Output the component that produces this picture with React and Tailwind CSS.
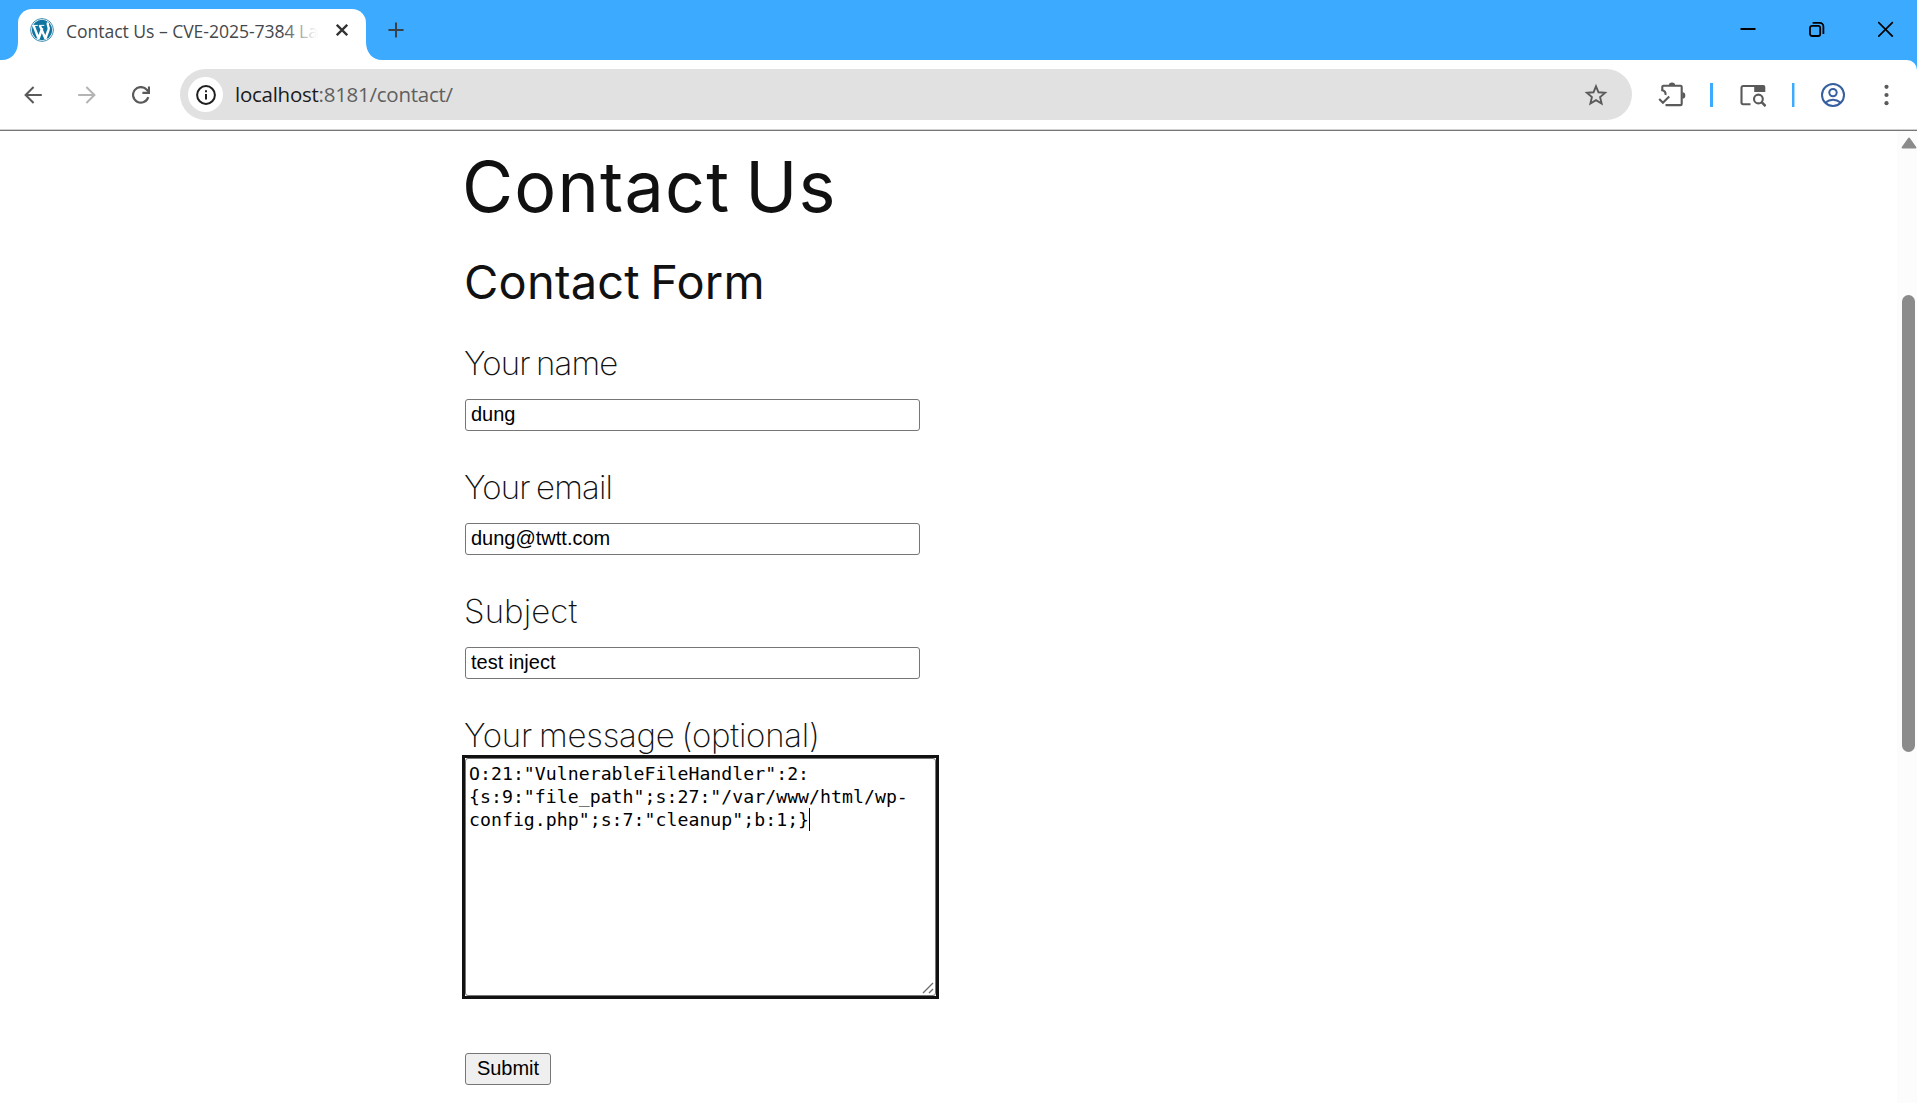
const fields = [
  { id: "your-name", label: "Your name", value: "dung", tracking: "tracking-[-0.85px]" },
  { id: "your-email", label: "Your email", value: "dung@twtt.com", tracking: "tracking-[-0.85px]" },
  { id: "your-subject", label: "Subject", value: "test inject", tracking: "tracking-[0.1px]" },
];

const messageLines = [
  'O:21:"VulnerableFileHandler":2:',
  '{s:9:"file_path";s:27:"/var/www/html/wp-',
  'config.php";s:7:"cleanup";b:1;}',
];

const WordPressIcon = () => (
  <svg className="h-6 w-6 shrink-0" viewBox="0 0 24 24" aria-hidden>
    <circle cx="12" cy="12" r="11.4" fill="#fff" stroke="#3f8fb3" strokeWidth="1" />
    <circle cx="12" cy="12" r="10.2" fill="#0f749f" />
    <path
      fill="none"
      stroke="#fff"
      strokeWidth="2.4"
      strokeLinejoin="bevel"
      d="M3.6 7.6 8.6 20.5 12.3 10 M9.9 7.6 15.4 20.5 18.6 11.5 C19.6 8.6 16.6 7.6 18 4.6"
    />
    <path stroke="#fff" strokeWidth="1" d="M2.6 7.4h5.2M8.9 7.4h5.4" />
  </svg>
);

function TabStrip() {
  return (
    <div className="flex h-[60px] items-end bg-[#3cabff]">
      <svg className="h-[18px] w-[18px] shrink-0" viewBox="0 0 18 18" aria-hidden>
        <path fill="#fff" d="M18 0v18H2C11 18 18 11 18 0z" />
      </svg>
      <div className="flex h-[51px] w-[348px] items-center rounded-t-[14px] bg-white pb-[9px] pl-3">
        <WordPressIcon />
        <div className="relative ml-3 w-[251px] pt-0.5 text-[17.6px] tracking-[-0.06px] whitespace-nowrap text-[#45484b]">
          Contact Us – CVE-2025-7384 La
          <span className="absolute inset-y-0 right-0 w-[34px] bg-linear-to-r from-transparent to-white" />
        </div>
        <svg className="ml-[19px] h-3 w-3 shrink-0" viewBox="0 0 12 12" stroke="#333" strokeWidth="2.3" aria-hidden>
          <path d="M.8.8l10.4 10.4M11.2.8.8 11.2" />
        </svg>
      </div>
      <svg className="h-[18px] w-[18px] shrink-0" viewBox="0 0 18 18" aria-hidden>
        <path fill="#fff" d="M0 0v18h16C7 18 0 11 0 0z" />
      </svg>
      <svg className="mb-[22px] ml-1 h-4 w-4" viewBox="0 0 16 16" stroke="#3a4148" strokeWidth="2" aria-hidden>
        <path d="M8 .4v15.2M.4 8h15.2" />
      </svg>

      <div className="ml-auto flex h-full items-center pb-[2px]">
        <button type="button" aria-label="Minimize" className="flex w-[62px] justify-center">
          <svg className="h-4 w-4" viewBox="0 0 16 16" stroke="#000" strokeWidth="2">
            <path d="M.5 8h15" />
          </svg>
        </button>
        <button type="button" aria-label="Restore" className="flex w-[76px] justify-center">
          <svg className="h-4 w-4" viewBox="0 0 16 16" fill="none" stroke="#000" strokeWidth="1.8">
            <rect x="1" y="4.8" width="10.2" height="10.2" rx="2" />
            <path d="M3.6 1.9h7.2a3.6 3.6 0 0 1 3.6 3.6v7.4" />
          </svg>
        </button>
        <button type="button" aria-label="Close" className="flex w-[62px] justify-center">
          <svg className="h-4 w-4" viewBox="0 0 16 16" stroke="#000" strokeWidth="1.7">
            <path d="M.2 1.1l14.6 14.6M14.8 1.1.2 15.7" />
          </svg>
        </button>
      </div>
    </div>
  );
}

function Toolbar() {
  return (
    <div className="bg-[#3cabff]">
      <div className="flex h-[69px] items-center rounded-tr-[10px] bg-white pl-1.5">
        <button type="button" aria-label="Back" className="flex w-[54px] justify-center">
          <svg className="h-[18px] w-[18px]" viewBox="0 0 18 18" fill="none" stroke="#5a5a5a" strokeWidth="2">
            <path d="M17.8 9H1.8M9.6 1 1.6 9l8 8" />
          </svg>
        </button>
        <button type="button" aria-label="Forward" className="flex w-[54px] justify-center">
          <svg className="h-[18px] w-[18px]" viewBox="0 0 18 18" fill="none" stroke="#b4b4b4" strokeWidth="2">
            <path d="M.2 9h16M8.4 1l8 8-8 8" />
          </svg>
        </button>
        <button type="button" aria-label="Reload" className="flex w-[54px] justify-center">
          <svg className="h-[18px] w-[18px]" viewBox="0 0 18 18" fill="none" stroke="#5a5a5a" strokeWidth="2.2">
            <path d="M16.3 11.2A7.8 7.8 0 1 1 14.9 3.9L17 6" />
            <path d="M17 .4v6.5h-6.6" />
          </svg>
        </button>

        <div className="ml-3 flex h-[51px] w-[1452px] items-center rounded-full bg-[#e1e1e1] pl-2">
          <div className="flex h-[35px] w-[35px] items-center justify-center rounded-full bg-white">
            <svg className="h-5 w-5" viewBox="0 0 20 20" fill="none" stroke="#1f1f1f" strokeWidth="2" aria-hidden>
              <circle cx="10" cy="10" r="8.9" />
              <path d="M10 9v5.5M10 5.3v2" />
            </svg>
          </div>
          <div className="ml-3 text-[20.5px] tracking-[-0.26px] text-[#5f5f5f]">
            <span className="text-[#1b1b1b]">localhost</span>:8181/contact/
          </div>
          <svg className="mr-[24px] ml-auto h-[24px] w-[24px]" viewBox="0 0 24 24" fill="none" stroke="#5a5a5a" strokeWidth="1.9" aria-hidden>
            <path d="M12 3.3l2.5 6 6.6.55-5 4.3 1.5 6.4L12 17.1l-5.6 3.4 1.5-6.4-5-4.3 6.6-.55z" />
          </svg>
        </div>

        <button type="button" aria-label="Extensions" className="ml-3 flex w-14 justify-center">
          <svg className="h-[26px] w-[28px]" viewBox="0 0 28 26" fill="none" stroke="#5a5a5a" strokeWidth="2.1">
            <path d="M4.3 9V4.9a1.2 1.2 0 0 1 1.2-1.2h17a1.2 1.2 0 0 1 1.2 1.2v17a1.2 1.2 0 0 1-1.2 1.2H7.5" />
            <path d="M3.6 8.3c3 .3 4.3 2 3.9 4.7M1.2 17l3.7 3.7 6.3-6.3" />
            <path fill="#5a5a5a" stroke="none" d="M10.8 3.4a3.2 3 0 0 1 6.4 0zM24.3 10.2a3 3.2 0 0 1 0 6.4z" />
          </svg>
        </button>
        <span className="ml-2.5 h-6 w-[3px] bg-[#3cabff]" />
        <button type="button" aria-label="Search tabs" className="ml-3 flex w-14 justify-center">
          <svg className="h-[24px] w-[26px]" viewBox="0 0 26 24" fill="none" stroke="#5a5a5a" strokeWidth="2.1">
            <path d="M10.5 21.2H3.2a1.7 1.7 0 0 1-1.7-1.7V4.7A1.7 1.7 0 0 1 3.2 3H23" />
            <path fill="#5a5a5a" stroke="none" d="M14.2 2h9.2A1.9 1.9 0 0 1 25.3 3.9V9H14.2z" />
            <circle cx="18.4" cy="16" r="4.4" />
            <path d="M21.6 19.2l4 4" strokeWidth="2.5" />
          </svg>
        </button>
        <span className="ml-[11px] h-6 w-[3px] bg-linear-to-r from-[#3cabff] from-60% to-[#a5d8ff] to-70%" />
        <button type="button" aria-label="Profile" className="ml-2.5 flex w-14 justify-center">
          <svg className="h-6 w-6" viewBox="0 0 24 24" fill="none" stroke="#365f9f" strokeWidth="2">
            <circle cx="12" cy="12" r="11" />
            <circle cx="12" cy="9.6" r="3.7" />
            <path d="M4.6 19.6c4.2-3.7 10.6-3.7 14.8 0" />
          </svg>
        </button>
        <button type="button" aria-label="Menu" className="flex w-[51px] justify-center">
          <svg className="h-[22px] w-[5px]" viewBox="0 0 5 22" fill="#5a5a5a">
            <circle cx="2.5" cy="2.8" r="2.1" />
            <circle cx="2.5" cy="11" r="2.1" />
            <circle cx="2.5" cy="19.2" r="2.1" />
          </svg>
        </button>
      </div>
    </div>
  );
}

function Scrollbar() {
  return (
    <div className="flex w-5 flex-col items-center bg-[#fcfcfc] pt-1.5">
      <svg className="ml-[3px] h-3 w-4" viewBox="0 0 16 12" aria-hidden>
        <path d="M8 1.5 14.4 10.6H1.6z" fill="#8b8b8b" stroke="#8b8b8b" strokeWidth="2" strokeLinejoin="round" />
      </svg>
      <div className="mt-[146px] ml-[3px] h-[457px] w-[13px] rounded-full bg-[#8b8b8b]" />
    </div>
  );
}

function ContactForm() {
  return (
    <form className="pt-[29px]" onSubmit={(event) => event.preventDefault()}>
      {fields.map((field) => (
        <div key={field.id} className="mb-8">
          <label
            htmlFor={field.id}
            className={`-ml-px block h-[60px] w-max font-['Inter'] text-[33px] leading-[48px] font-extralight [word-spacing:-2px] ${field.tracking}`}
          >
            {field.label}
          </label>
          <input
            id={field.id}
            defaultValue={field.value}
            className="block h-8 w-[455px] rounded-[3px] border border-[#767676] px-[5px] pb-[2px] font-['Liberation_Sans'] text-[20px] text-black"
          />
        </div>
      ))}

      <div className="-ml-px h-[47px] w-max font-['Inter'] text-[33px] leading-[48px] font-extralight tracking-[-0.25px] [word-spacing:-2px]">
        Your message (optional)
      </div>
      {/* focus ring stays square while the field itself is rounded */}
      <div className="h-[238px] w-[471px] outline-3 outline-[#111]">
        <div className="relative h-full rounded-[3px] border border-[#767676] bg-white px-[3px] pt-[3px] font-['DejaVu_Sans_Mono'] text-[18.18px] leading-[23px] tracking-[0.03px] whitespace-pre text-black">
          {messageLines.map((line, i) => (
            <div key={line} className="flex items-center">
              {line}
              {i === messageLines.length - 1 && <span className="h-[23px] w-px bg-black" />}
            </div>
          ))}
          <svg className="absolute right-px bottom-px h-3 w-3" viewBox="0 0 12 12" stroke="#6b6b6b" strokeWidth="1.3" aria-hidden>
            <path d="M1 11 11 1M7 11l4-4" />
          </svg>
        </div>
      </div>

      <button
        type="submit"
        className="mt-[57px] h-8 w-[86px] rounded-[3px] border border-[#767676] bg-[#efefef] pb-[2px] font-['Liberation_Sans'] text-[20px] leading-none text-black"
      >
        Submit
      </button>
    </form>
  );
}

export default function App() {
  return (
    <div className="flex h-[1103px] w-[1917px] flex-col overflow-hidden bg-white font-['Open_Sans',sans-serif]">
      <TabStrip />
      <Toolbar />
      <div className="h-0.5 border-t border-b border-t-[#d0d0d0] border-b-[#777777]" />
      <div className="flex min-h-0 flex-1">
        <main className="flex-1 pt-4 pl-[465px] text-[#111]">
          <h1 className="-ml-[3px] w-max font-['Inter'] text-[70px] leading-[80px] font-normal tracking-[1.2px] [word-spacing:-6px]">
            Contact Us
          </h1>
          <h2 className="-ml-px mt-[27px] w-max font-['Inter'] text-[47px] leading-[56px] font-normal tracking-[0.2px] [word-spacing:-3px]">
            Contact Form
          </h2>
          <ContactForm />
        </main>
        <Scrollbar />
      </div>
    </div>
  );
}
